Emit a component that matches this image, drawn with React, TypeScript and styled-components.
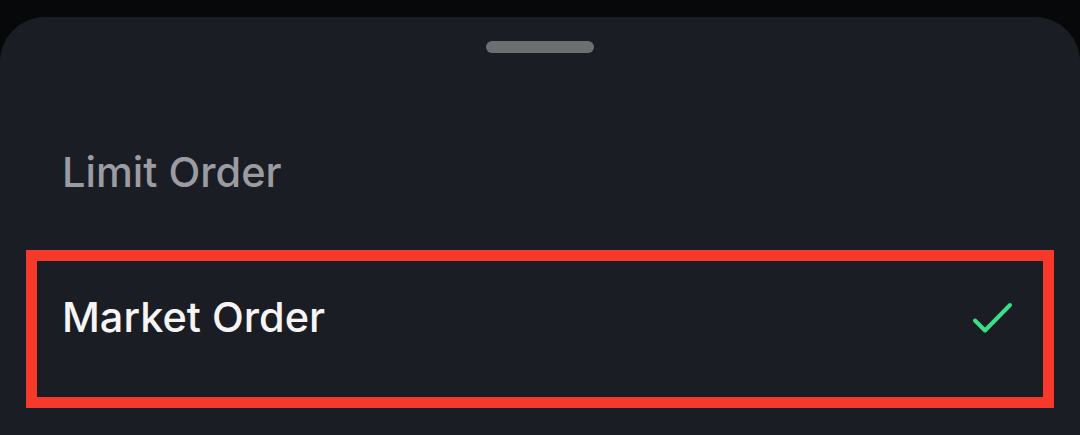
import * as React from "react"
import styled, { createGlobalStyle } from "styled-components"

const GlobalStyle = createGlobalStyle`
  html, body {
    margin: 0;
    padding: 0;
    background: #07080a;
  }
  body {
    font-family: Inter, "Noto Sans", sans-serif;
  }
`

const Page = styled.div`
  width: 1080px;
  height: 435px;
  padding-top: 17px;
  box-sizing: border-box;
  overflow: hidden;
`

const Sheet = styled.div`
  background: #1b1d24;
  border-radius: 45px 45px 0 0;
  height: 100%;
  display: flex;
  flex-direction: column;
`

const Handle = styled.div`
  align-self: center;
  width: 108px;
  height: 12px;
  margin-top: 24px;
  border-radius: 6px;
  background: #6d6e72;
`

const List = styled.div`
  display: flex;
  flex-direction: column;
  margin-top: 95px;
`

const Row = styled.div<{ $selected?: boolean }>`
  display: flex;
  align-items: center;
  justify-content: space-between;
  box-sizing: border-box;
  ${(p) =>
    p.$selected
      ? `
    margin: 54px 26px 0;
    border: 11px solid #f6392a;
    padding: 32px 28px 56px 25px;
  `
      : `
    padding: 0 62px;
  `}
`

const Label = styled.span<{ $selected?: boolean }>`
  font-size: 41.5px;
  line-height: 48px;
  font-weight: 500;
  color: ${(p) => (p.$selected ? "#f5f5f6" : "#9b9ca1")};
`

const Check = () => (
  <svg width="44" height="36" viewBox="0 0 44 36" fill="none">
    <polyline
      points="4,21.5 14,31.5 39,6"
      stroke="#3ddf86"
      strokeWidth="4"
      strokeLinecap="round"
      strokeLinejoin="round"
    />
  </svg>
)

const options = ["Limit Order", "Market Order"]

export default function App() {
  const selected = "Market Order"
  return (
    <>
      <GlobalStyle />
      <Page>
        <Sheet>
          <Handle />
          <List>
            {options.map((o) => (
              <Row key={o} $selected={o === selected}>
                <Label $selected={o === selected}>{o}</Label>
                {o === selected && <Check />}
              </Row>
            ))}
          </List>
        </Sheet>
      </Page>
    </>
  )
}
